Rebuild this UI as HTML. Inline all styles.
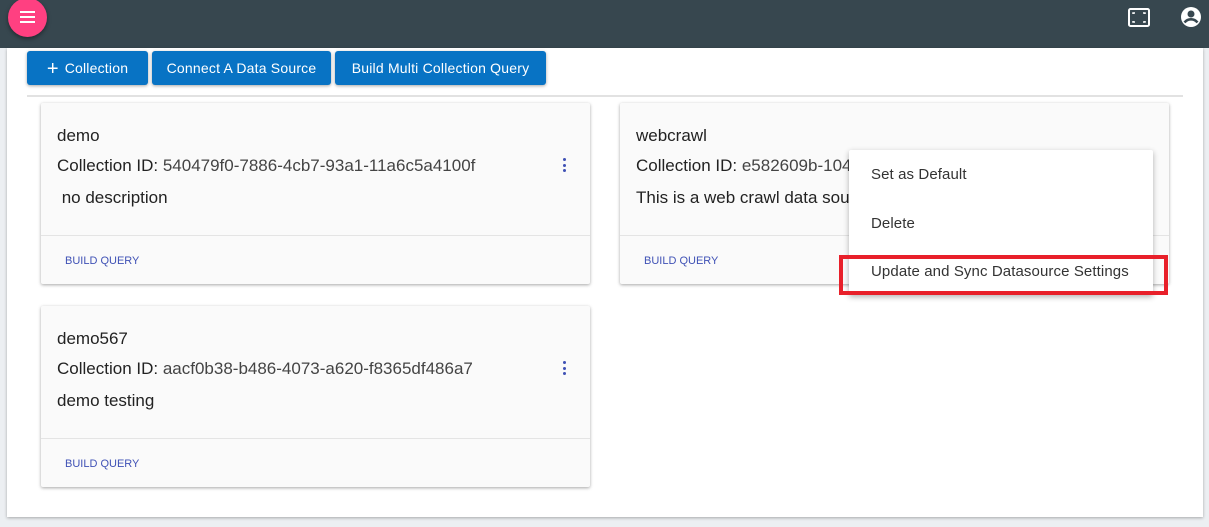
<!DOCTYPE html>
<html><head><style>
*{margin:0;padding:0;box-sizing:border-box}
body{width:1209px;height:527px;background:#eceff2;font-family:"Liberation Sans",sans-serif;position:relative;overflow:hidden;color:#222}
.hdr{position:absolute;left:0;top:0;width:1209px;height:48px;background:#37474f}
.fab{position:absolute;left:8px;top:-2px;width:39px;height:39px;border-radius:50%;background:#ff4081;box-shadow:0 2px 4px rgba(0,0,0,.4)}
.fab i{position:absolute;left:12px;width:15px;height:2px;background:#fff}
.panel{position:absolute;left:7px;top:48px;width:1196px;height:469px;background:#fff;box-shadow:0 1px 3px rgba(0,0,0,.3)}
.btn{position:absolute;top:51px;height:34px;background:#0873c4;color:#fff;font-size:14px;border-radius:3px;box-shadow:0 1px 3px rgba(0,0,0,.35);line-height:34px;text-align:center;letter-spacing:.2px}
.sep{position:absolute;left:27px;top:95px;width:1156px;height:2px;background:#e2e2e2}
.card{position:absolute;width:549px;height:181px;background:#fafafa;box-shadow:0 1px 3px rgba(0,0,0,.35);border-radius:2px;overflow:hidden}
.card .t{position:absolute;left:16px;top:23px;font-size:17px}
.card .id{position:absolute;left:16px;top:53px;font-size:17px;color:#444;white-space:nowrap}
.card .id b{font-weight:normal;color:#222}
.card .d{position:absolute;left:16px;top:85px;font-size:17px;white-space:nowrap}
.card .f{position:absolute;left:0;top:132px;width:100%;border-top:1px solid #e4e4e4}
.card .q{position:absolute;left:24px;top:152px;font-size:11px;color:#3f51b5}
.dots{position:absolute;left:522px;top:55px;width:4px}
.dots i{display:block;width:3px;height:3px;border-radius:50%;background:#3f51b5;margin-bottom:2.5px}
.menu{position:absolute;left:849px;top:150px;width:304px;height:145px;background:#fff;box-shadow:0 2px 6px rgba(0,0,0,.3);border-radius:2px}
.menu div{position:absolute;left:22px;font-size:15px;color:#333;letter-spacing:.1px}
.red{position:absolute;left:839px;top:255px;width:329px;height:40px;border:4px solid #e8202a}
</style></head><body>
<div class="hdr"></div>
<div class="fab"><i style="top:13px"></i><i style="top:18px"></i><i style="top:23px"></i></div>
<svg style="position:absolute;left:1127px;top:7px" width="24" height="22" viewBox="0 0 24 22"><rect x="2" y="2" width="20" height="17" rx="1.5" fill="none" stroke="#fff" stroke-width="2"/><path d="M6 7V6h2M16 6h2v1M6 14v1h2M16 15h2v-1" stroke="#fff" stroke-width="1.5" fill="none"/></svg>
<svg style="position:absolute;left:1180px;top:6px" width="22" height="22" viewBox="0 0 22 22"><circle cx="11" cy="11" r="10" fill="#fff"/><circle cx="11" cy="8" r="3.5" fill="#37474f"/><path d="M4.5 16.5c2-2.5 4-3.2 6.5-3.2s4.5.7 6.5 3.2" stroke="#37474f" stroke-width="2.6" fill="none"/></svg>
<div class="panel"></div>
<div class="btn" style="left:27px;width:121px"><span style="font-size:20px;vertical-align:-2px;margin-right:6px;font-weight:300">+</span>Collection</div>
<div class="btn" style="left:152px;width:179px">Connect A Data Source</div>
<div class="btn" style="left:335px;width:211px">Build Multi Collection Query</div>
<div class="sep"></div>
<div class="card" style="left:41px;top:103px"><div class="t">demo</div><div class="id"><b>Collection ID:</b> 540479f0-7886-4cb7-93a1-11a6c5a4100f</div><div class="d">&nbsp;no description</div><div class="dots"><i></i><i></i><i></i></div><div class="f"></div><div class="q">BUILD QUERY</div></div>
<div class="card" style="left:620px;top:103px"><div class="t">webcrawl</div><div class="id"><b>Collection ID:</b> e582609b-1045-4a7b-9c1d-22b5f3e8a901</div><div class="d">This is a web crawl data source</div><div class="f"></div><div class="q">BUILD QUERY</div></div>
<div class="card" style="left:41px;top:306px"><div class="t">demo567</div><div class="id"><b>Collection ID:</b> aacf0b38-b486-4073-a620-f8365df486a7</div><div class="d">demo testing</div><div class="dots"><i></i><i></i><i></i></div><div class="f"></div><div class="q">BUILD QUERY</div></div>
<div class="menu"><div style="top:16px">Set as Default</div><div style="top:65px">Delete</div><div style="top:113px">Update and Sync Datasource Settings</div></div>
<div class="red"></div>
</body></html>
